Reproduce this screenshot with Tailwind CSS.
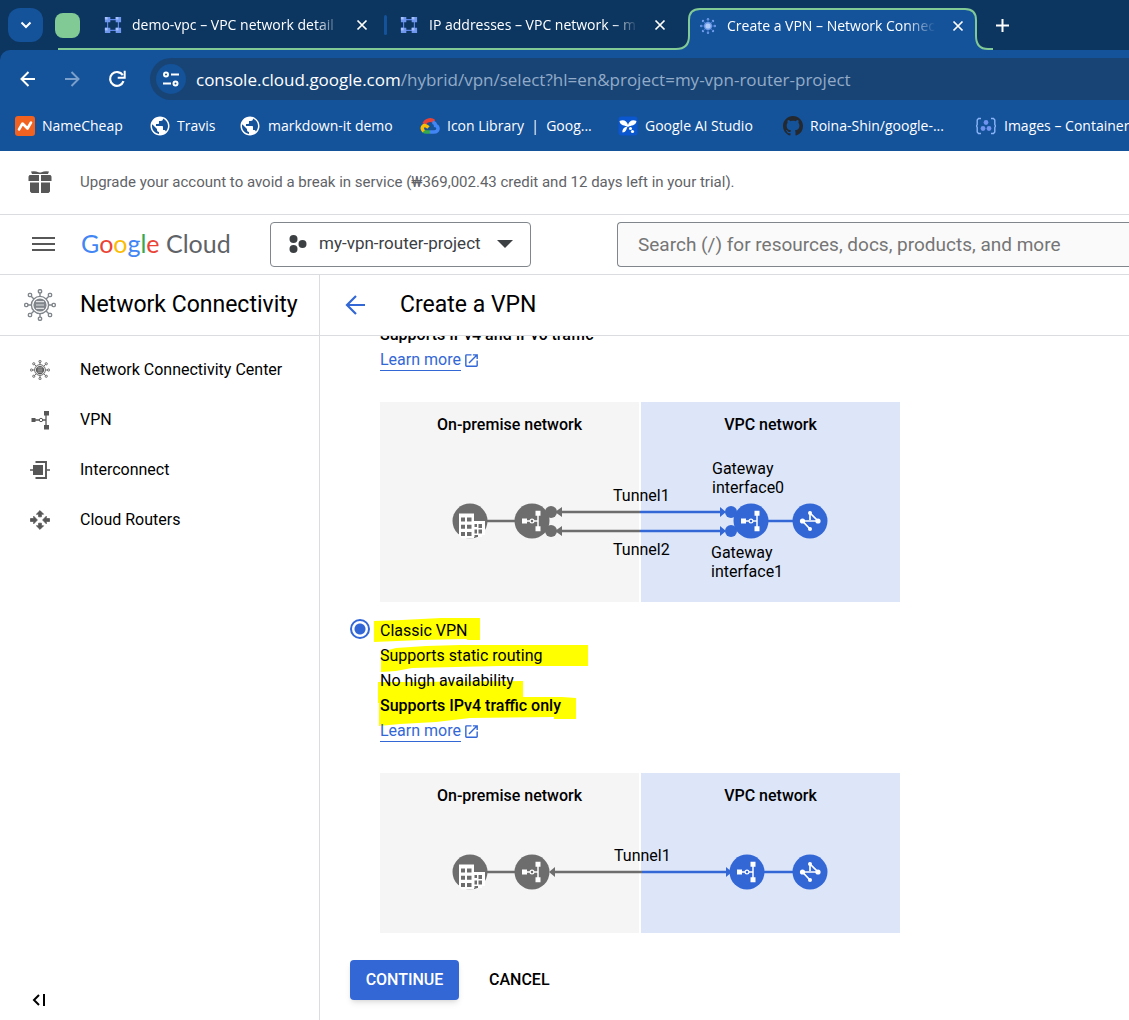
<!DOCTYPE html>
<html lang="en">
<head>
<meta charset="utf-8">
<meta name="viewport" content="width=device-width, initial-scale=1">
<title>Create a VPN – Network Connectivity</title>
<script src="https://cdn.jsdelivr.net/npm/@tailwindcss/browser@4"></script>
</head>
<body class="flex h-screen flex-col overflow-hidden bg-white font-['Roboto',sans-serif] text-base text-black">

<!-- Shared symbols -->
<svg class="hidden" aria-hidden="true">
  <symbol id="vpc" viewBox="0 0 20 20">
    <path d="M4 4h12v12H4z" fill="none" stroke="#5b86e8" stroke-width="1.3"/>
    <path d="M1 1h6v6H1zM13 1h6v6h-6zM1 13h6v6H1zM13 13h6v6h-6z" fill="#6f97ee"/>
    <path d="M1 1h3v3H1zM13 1h3v3h-3zM1 13h3v3H1zM13 13h3v3h-3z" fill="#a5c0fa"/>
  </symbol>
  <symbol id="hub" viewBox="0 0 32 32">
    <g fill="none" stroke="currentColor" stroke-width="1.4">
      <circle cx="16" cy="16" r="8.6"/>
      <path d="M16 7.4V3.6M16 24.6v3.8M7.4 16H3.6M24.6 16h3.8M9.9 9.9 7.2 7.2M22.1 9.9l2.7-2.7M9.9 22.1l-2.7 2.7M22.1 22.1l2.7 2.7"/>
      <rect x="14.4" y=".7" width="3.2" height="3.2" rx="1"/><rect x="14.4" y="28.1" width="3.2" height="3.2" rx="1"/>
      <rect x=".7" y="14.4" width="3.2" height="3.2" rx="1"/><rect x="28.1" y="14.4" width="3.2" height="3.2" rx="1"/>
      <rect x="4.4" y="4.4" width="3.2" height="3.2" rx="1"/><rect x="24.4" y="4.4" width="3.2" height="3.2" rx="1"/>
      <rect x="4.4" y="24.4" width="3.2" height="3.2" rx="1"/><rect x="24.4" y="24.4" width="3.2" height="3.2" rx="1"/>
    </g>
    <circle cx="16" cy="16" r="6.6" fill="currentColor"/>
    <path d="M12 12.6h8M12 16h8M12 19.4h8" stroke="#fff" stroke-width="1.2" opacity=".75"/>
  </symbol>
  <symbol id="hub-tab" viewBox="0 0 16 16">
    <g fill="#6f9bea"><circle cx="8" cy="1.200" r="1.200"/><circle cx="8" cy="14.800" r="1.200"/><circle cx="1.200" cy="8" r="1.200"/><circle cx="14.800" cy="8" r="1.200"/><circle cx="3" cy="3" r="1.200"/><circle cx="13" cy="3" r="1.200"/><circle cx="3" cy="13" r="1.200"/><circle cx="13" cy="13" r="1.200"/></g>
    <path d="M8 1v14M1 8h14M3 3l10 10M13 3 3 13" stroke="#4d7fdc" stroke-width=".8"/>
    <circle cx="8" cy="8" r="4" fill="#6f9bea"/><circle cx="8" cy="8" r="2.600" fill="#aecbfa"/>
  </symbol>
  <symbol id="globe" viewBox="2 2 20 20">
    <path fill="#fff" d="M12 2.500C6.750 2.500 2.500 6.750 2.500 12s4.250 9.500 9.500 9.500 9.500-4.250 9.500-9.500S17.250 2.500 12 2.500zm-1 17.430c-3.950-.49-7-3.850-7-7.930 0-.62.08-1.210.21-1.790L9 15v1c0 1.100.9 2 2 2v1.930zm6.900-2.540c-.26-.81-1-1.390-1.900-1.390h-1v-3c0-.55-.45-1-1-1H8v-2h2c.55 0 1-.45 1-1V7h2c1.100 0 2-.9 2-2v-.41c2.930 1.190 5 4.060 5 7.410 0 2.080-.8 3.970-2.100 5.390z"/>
  </symbol>
  <symbol id="close" viewBox="0 0 12 12"><path d="m1.500 1.500 9 9m0-9-9 9" stroke="#fff" stroke-width="1.700"/></symbol>
  <symbol id="external" viewBox="0 0 24 24"><path fill="currentColor" d="M19 19H5V5h7V3H5a2 2 0 0 0-2 2v14a2 2 0 0 0 2 2h14c1.100 0 2-.9 2-2v-7h-2v7zM14 3v2h3.590l-9.830 9.830 1.410 1.410L19 6.410V10h2V3h-7z"/></symbol>
  <symbol id="node-office" viewBox="-20 -20 40 40">
    <circle r="17.500" fill="#6d6d6d"/>
    <path d="M-11-7.500H4V0h11v14h-3v2H4v1.500h-12l-3-3z" fill="#fff"/>
    <path d="M-9-3.600h4v4h-4zM-3-3.600h4.500v4H-3zM-9 3.700h4v4h-4zM-3 3.700h4.500v4H-3zM-9 11h4v4h-4zM-3 11h4.500v4H-3zM4.500 3h2.500v3H4.500zM8.500 3H12v4H8.500zM4.500 8.500H7v4H4.500zM8.500 8.500H12v4H8.500zM4.500 14H8v2H4.500z" fill="#6d6d6d"/>
  </symbol>
  <symbol id="node-gateway" viewBox="-20 -20 40 40">
    <circle r="17.500" fill="currentColor"/>
    <path d="M-6 0H6M6-8V8" stroke="#fff" stroke-width="1.500" fill="none"/>
    <path d="M-10-2.500h5v5h-5zM3.500-10.300h5v5h-5zM3.500 5.300h5v5h-5z" fill="#fff"/>
    <circle r="1.900" fill="currentColor" stroke="#fff" stroke-width="1.200"/>
  </symbol>
  <symbol id="node-vpc" viewBox="-20 -20 40 40">
    <circle r="17.500" fill="#3367d6"/>
    <path d="M0 8-7.500 0H8L0-8V-1" fill="none" stroke="#fff" stroke-width="1.700"/>
    <g fill="#fff"><circle cx="-7.500" r="2.600"/><circle cx="8" r="2.600"/><circle cy="-8" r="2"/><circle cy="8" r="2"/></g>
  </symbol>
</svg>

<header class="shrink-0 bg-[#0c3560] font-['Open_Sans',sans-serif] text-white">
  <!-- Tab strip -->
  <div class="flex h-[50px] overflow-hidden">
    <button aria-label="Search tabs" class="mt-2 ml-2 grid h-[34px] w-[35px] shrink-0 place-items-center rounded-xl bg-[#14529a]">
      <svg class="size-3" viewBox="0 0 12 12"><path d="m1.500 3.500 4.500 4.500 4.500-4.500" fill="none" stroke="#fff" stroke-width="2"/></svg>
    </button>
    <div class="ml-[15px] flex w-[616px] shrink-0 items-center border-b-2 border-[#81c995] pt-0.5">
      <span class="-ml-[3px] size-[25px] shrink-0 rounded-lg bg-[#81c995]"></span>
      <a href="#" class="ml-6 flex w-[272px] items-center">
        <svg class="mr-[10px] size-[18px] shrink-0"><use href="#vpc"/></svg>
        <span class="w-[209px] overflow-hidden text-sm whitespace-nowrap [mask-image:linear-gradient(to_right,black_88%,transparent)]">demo-vpc – VPC network detail</span>
        <svg class="ml-[15px] size-3 shrink-0"><use href="#close"/></svg>
      </a>
      <span class="ml-2 h-5 w-[3px] rounded bg-[#14529a]"></span>
      <a href="#" class="ml-[13px] flex items-center">
        <svg class="mr-[11px] size-[18px] shrink-0"><use href="#vpc"/></svg>
        <span class="w-[209px] overflow-hidden text-sm whitespace-nowrap [mask-image:linear-gradient(to_right,black_88%,transparent)]">IP addresses – VPC network – m</span>
        <svg class="ml-4 size-3 shrink-0"><use href="#close"/></svg>
      </a>
    </div>
    <svg class="h-[50px] w-[26px] shrink-0" viewBox="0 0 26 50"><path d="M0 49H2Q15 49 15 36V20Q15 9 26 9V50H0z" fill="#14529a"/><path d="M0 49H2Q15 49 15 36V20Q15 9 26 9" fill="none" stroke="#81c995" stroke-width="2"/></svg>
    <a href="#" class="mt-2 flex w-[264px] shrink-0 items-center border-t-2 border-[#81c995] bg-[#14529a] pb-2">
      <svg class="mr-[11px] size-4 shrink-0"><use href="#hub-tab"/></svg>
      <span class="w-[209px] overflow-hidden text-sm whitespace-nowrap [mask-image:linear-gradient(to_right,black_85%,transparent)]">Create a VPN – Network Connec</span>
      <svg class="ml-4 size-3 shrink-0"><use href="#close"/></svg>
    </a>
    <svg class="h-[50px] w-[29px] shrink-0" viewBox="0 0 29 50"><path d="M0 9H1Q12 9 12 20V36Q12 49 24 49H29V50H0z" fill="#14529a"/><path d="M0 9H1Q12 9 12 20V36Q12 49 24 49H29" fill="none" stroke="#81c995" stroke-width="2"/></svg>
    <button aria-label="New tab" class="ml-[3px] self-center"><svg class="size-[13px]" viewBox="0 0 13 13"><path d="M6.500 0v13M0 6.500h13" stroke="#fff" stroke-width="2"/></svg></button>
  </div>

  <!-- Toolbar -->
  <div class="h-[101px] overflow-hidden rounded-tl-[10px] bg-[#14529a]">
    <div class="flex items-center pt-2">
      <button aria-label="Back" class="ml-5"><svg class="size-4" viewBox="0 0 16 16"><path d="M15 8H2m6.500-7L1.500 8l7 7" fill="none" stroke="#fff" stroke-width="2"/></svg></button>
      <button aria-label="Forward" class="ml-7"><svg class="size-4" viewBox="0 0 16 16"><path d="M1 8h13M7.500 1l7 7-7 7" fill="none" stroke="#7a9fcb" stroke-width="2"/></svg></button>
      <button aria-label="Reload" class="ml-7"><svg class="size-[18px]" viewBox="0 0 18 18"><path d="M15.500 11.200A6.900 6.900 0 1 1 14.800 5.200" fill="none" stroke="#fff" stroke-width="2.200"/><path d="M16.700.8v7h-7" fill="none" stroke="#fff" stroke-width="2"/></svg></button>
      <div class="ml-6 flex h-[42px] flex-1 items-center rounded-l-full bg-[#184475] pl-1.5">
        <button aria-label="Site information" class="grid size-[30px] shrink-0 place-items-center rounded-full bg-[#14529a]"><svg class="size-4" viewBox="0 0 16 16"><g fill="none" stroke="#fff" stroke-width="2"><circle cx="3" cy="3.500" r="2"/><path d="M8 3.500h8M0 12.500h8"/><circle cx="12.500" cy="12.500" r="2"/></g></svg></button>
        <div class="ml-[10px] pt-0.5 text-[17px] whitespace-nowrap text-[#93abc8]"><span class="text-white">console.cloud.google.com</span>/hybrid/vpn/select?hl=en&amp;project=my-vpn-router-project</div>
      </div>
    </div>
    <nav class="mt-4 flex h-5 items-center pl-[15px] text-sm whitespace-nowrap">
      <a href="#" class="flex w-[136px] shrink-0 items-center gap-[7px]"><svg class="size-5" viewBox="0 0 20 20"><rect width="20" height="20" rx="3" fill="#f1611f"/><path d="M4 13.500 7.500 7.500 12.500 12.500 16 6.500" fill="none" stroke="#fff" stroke-width="2.600" stroke-linecap="round" stroke-linejoin="round"/></svg>NameCheap</a>
      <a href="#" class="flex w-[90px] shrink-0 items-center gap-[7px]"><svg class="-ml-px size-5"><use href="#globe"/></svg>Travis</a>
      <a href="#" class="flex w-[179px] shrink-0 items-center gap-2"><svg class="-ml-px size-5"><use href="#globe"/></svg>markdown-it demo</a>
      <a href="#" class="flex w-[198px] shrink-0 items-center gap-[7px] whitespace-pre"><svg class="size-5" viewBox="0 0 20 20" fill="none" stroke-width="4"><path d="M4.300 8A6 5.500 0 0 1 14 5.500" stroke="#ea4335"/><path d="M12.500 6.300Q15.500 7 15.600 9.600 18.200 10.200 18 13 17.500 16 14 16H10" stroke="#4285f4" stroke-width="3.500"/><path d="M10 16H6.500Q4.500 16 3.500 15" stroke="#34a853" stroke-width="3.500"/><path d="M3.700 15.300Q1.200 12.500 3 10.300 5 8.200 8.500 11.500" stroke="#fbbc04" stroke-width="3.500"/></svg>Icon Library  |  Goog...</a>
      <a href="#" class="flex w-[165px] shrink-0 items-center gap-[7px]"><svg class="size-5" viewBox="0 0 20 20"><rect x=".5" y=".5" width="19" height="19" rx="3" fill="#0b57d0"/><path d="M10 11C7 9 2 10 1.500 5 5 3 9 4.500 10 9 11 4.500 15 3 18.500 5 18 10 13 9 10 11zM9.500 10.500C8.500 13 8 16.500 4.500 16.500 4 13.500 6 11 9.500 10.500z" fill="#fff"/><circle cx="12.500" cy="12.500" r="1.500" fill="#fff"/><circle cx="14.500" cy="15.500" r="1.600" fill="#fff"/></svg>Google AI Studio</a>
      <a href="#" class="flex w-[193px] shrink-0 items-center gap-[7px]"><svg class="size-5" viewBox="0 0 16 16"><path fill="#24292f" d="M8 0C3.580 0 0 3.580 0 8c0 3.540 2.290 6.530 5.470 7.590.4.070.55-.17.55-.38 0-.19-.01-.82-.01-1.490-2.010.37-2.530-.49-2.690-.94-.09-.23-.48-.94-.82-1.130-.28-.15-.68-.52-.01-.53.63-.01 1.080.58 1.230.82.72 1.210 1.870.87 2.330.66.07-.52.28-.87.51-1.070-1.780-.2-3.640-.89-3.640-3.950 0-.87.31-1.590.82-2.150-.08-.2-.36-1.020.08-2.120 0 0 .67-.21 2.200.82.64-.18 1.320-.27 2-.27s1.360.09 2 .27c1.530-1.040 2.200-.82 2.200-.82.44 1.100.16 1.920.08 2.120.51.56.82 1.270.82 2.150 0 3.070-1.870 3.750-3.650 3.950.29.25.54.73.54 1.480 0 1.070-.01 1.930-.01 2.200 0 .21.15.46.55.38A8 8 0 0 0 16 8c0-4.420-3.580-8-8-8z"/></svg>Roina-Shin/google-...</a>
      <a href="#" class="flex shrink-0 items-center gap-2"><svg class="size-5" viewBox="0 0 20 20"><path d="M5 2.500H2.500L1.200 4v4.500L.5 10l.7 1.500V16l1.300 1.500H5M15 2.500h2.500L18.800 4v4.500l.7 1.500-.7 1.500V16l-1.300 1.500H15" fill="none" stroke="#8ab4f8" stroke-width="1.400"/><g fill="#6f93ee"><circle cx="10" cy="6.500" r="2.400"/><circle cx="7" cy="12.500" r="2.400"/><circle cx="13" cy="12.500" r="2.400"/></g></svg>Images – Container</a>
    </nav>
  </div>
</header>

<!-- Trial banner -->
<div class="flex h-16 shrink-0 items-center border-b border-[#dadce0] pl-7 text-[15px] text-[#5f6368]">
  <svg class="mr-7 size-6" viewBox="0 1 24 24" fill="#575757"><path d="M1.500 5H11v6H.5V6.500zM13 5h9.500l1 1.500V11H13zM2 12.500h9V23H3.500L2 21.500zM13 12.500h9v9L20.500 23H13z"/><path d="M3 1.500Q7 .5 10.500 2.200q1.500.8 3 0Q17 .5 21 1.500L20 4H4z"/></svg>
  <p>Upgrade your account to avoid a break in service (₩369,002.43 credit and 12 days left in your trial).</p>
</div>

<!-- Console bar -->
<div class="flex h-[60px] shrink-0 items-center border-b border-[#dadce0]">
  <button aria-label="Navigation menu" class="ml-8"><svg class="h-[15px] w-[23px]" viewBox="0 0 23 15"><path d="M0 1h23M0 7h23M0 13h23" stroke="#575757" stroke-width="2"/></svg></button>
  <a href="#" class="ml-[26px] w-[189px] shrink-0 pb-0.5 font-['Lato',sans-serif] text-[25px] text-[#5f6368]"><span class="text-[#4285f4]">G</span><span class="text-[#ea4335]">o</span><span class="text-[#fbbc04]">o</span><span class="text-[#4285f4]">g</span><span class="text-[#34a853]">l</span><span class="text-[#ea4335]">e</span> Cloud</a>
  <button class="flex h-[45px] w-[261px] shrink-0 items-center rounded border border-[#80868b] pr-[17px] pb-0.5 pl-[18px] text-[17px] text-[#3c4043]">
    <svg class="mr-3 h-[18px] w-[18px]" viewBox="0 0 18 18" fill="#3c4043"><circle cx="4.500" cy="4" r="4"/><circle cx="4.500" cy="14" r="4"/><circle cx="13.500" cy="9" r="4"/></svg>
    my-vpn-router-project
    <svg class="ml-auto h-2 w-4" viewBox="0 0 16 8"><path d="M0 0h16L8 8z" fill="#3c4043"/></svg>
  </button>
  <input type="search" aria-label="Search" placeholder="Search (/) for resources, docs, products, and more" class="ml-[86px] h-[45px] min-w-0 flex-1 rounded-l border border-r-0 border-[#80868b] bg-[#fafafa] pl-5 text-[19px] placeholder:text-[#757575]">
</div>

<div class="flex min-h-0 flex-1">
  <!-- Product sidebar -->
  <aside class="flex w-80 shrink-0 flex-col border-r border-[#dadce0]">
    <div class="flex h-[61px] shrink-0 items-center border-b border-[#dadce0] pl-6">
      <svg class="mr-6 size-8 text-[#80868b]"><use href="#hub"/></svg>
      <h2 class="text-[23px]">Network Connectivity</h2>
    </div>
    <nav class="pt-[9px]">
      <a href="#" class="flex h-[50px] items-center gap-[30px] pl-[30px]"><svg class="size-5 text-[#575757]"><use href="#hub"/></svg>Network Connectivity Center</a>
      <a href="#" class="flex h-[50px] items-center gap-[30px] pl-[30px]"><svg class="size-5" viewBox="0 0 20 20"><path d="M4 10h12M16 3v14" stroke="#575757" stroke-width="1.300"/><path d="M1.500 8h4v4h-4zM14 1h5v4.500h-5zM14 15h5v4.500h-5z" fill="#575757"/><circle cx="11" cy="10" r="1.700" fill="#fff" stroke="#575757"/></svg>VPN</a>
      <a href="#" class="flex h-[50px] items-center gap-[30px] pl-[30px]"><svg class="size-5" viewBox="0 0 20 20"><path d="M3 5h10v10H3zM0 9.200h3v1.600H0zM17 9.200h3v1.600h-3z" fill="#575757"/><path d="M5.500 2H16v16H5.500" fill="none" stroke="#575757" stroke-width="1.900"/></svg>Interconnect</a>
      <a href="#" class="flex h-[50px] items-center gap-[30px] pl-[30px]"><svg class="size-5" viewBox="0 0 20 20" fill="#575757" stroke="#575757" stroke-width=".8"><path d="m10 .6 3.600 3.600h-2.200v2.600H8.600V4.200H6.400zM10 19.400l-3.600-3.600h2.200v-2.600h2.800v2.600h2.200zM7.400 10l-3.700 3.800v-2.400H.4V8.600h3.300V6.200zM12.600 10l3.700-3.800v2.400h3.300v2.800h-3.300v2.400z"/></svg>Cloud Routers</a>
    </nav>
    <button aria-label="Collapse menu" class="mt-auto mb-3.5 ml-8 self-start"><svg class="h-3 w-3.5" viewBox="0 0 14 12"><path d="M7 1 2 6l5 5M12 0v12" fill="none" stroke="#000" stroke-width="2"/></svg></button>
  </aside>

  <main class="flex min-w-0 flex-1 flex-col">
    <div class="flex h-[61px] shrink-0 items-center border-b border-[#dadce0] pl-[25px]">
      <button aria-label="Go back" class="mr-[35px]"><svg class="size-5" viewBox="0 0 20 20"><path d="M20 10H2m9-9-9 9 9 9" fill="none" stroke="#3367d6" stroke-width="2.200"/></svg></button>
      <h1 class="text-[23px]">Create a VPN</h1>
    </div>

    <form class="min-h-0 flex-1 overflow-hidden pl-[30px]">
      <!-- High-availability option, scrolled partly out of view -->
      <section class="-mt-3.5 pl-[30px] leading-[25px]">
        <p class="font-medium">Supports IPv4 and IPv6 traffic</p>
        <a href="#" class="inline-flex items-center gap-0.5 text-[#3367d6]"><span class="border-b border-[#3367d6] leading-5">Learn more</span><svg class="size-[17px]"><use href="#external"/></svg></a>
      </section>
      <figure class="relative mt-[30px] ml-[30px] grid h-[200px] w-[520px] grid-cols-2 gap-0.5 text-center font-medium">
        <div class="bg-[#f5f5f5] pt-[11px]">On-premise network</div>
        <div class="bg-[#dde6f8] pt-[11px]">VPC network</div>
        <svg class="absolute inset-0 size-full" viewBox="0 0 520 200">
          <g stroke-width="2.500" fill="none"><path d="M106 119h30M182 110h78M182 129h78" stroke="#6d6d6d"/><path d="M260 110h81M260 129h81M387 119h27" stroke="#3367d6"/></g>
          <path d="M175 110l7-5v10zM175 129l7-5v10z" fill="#6d6d6d"/><path d="M346 110l-6-5v10zM346 129l-6-5v10z" fill="#3367d6"/>
          <g fill="#6d6d6d"><circle cx="171" cy="110" r="6"/><circle cx="171" cy="129" r="6"/></g>
          <g fill="#3367d6"><circle cx="351" cy="110" r="6"/><circle cx="351" cy="129" r="6"/></g>
          <use href="#node-office" x="70" y="99" width="40" height="40"/>
          <use href="#node-gateway" x="132" y="99" width="40" height="40" class="text-[#6d6d6d]"/>
          <use href="#node-gateway" x="351" y="99" width="40" height="40" class="text-[#3367d6]"/>
          <use href="#node-vpc" x="410" y="99" width="40" height="40"/>
          <g class="font-normal"><text x="233" y="99">Tunnel1</text><text x="233" y="153">Tunnel2</text><text x="332" y="72">Gateway</text><text x="332" y="91">interface0</text><text x="331" y="156">Gateway</text><text x="331" y="175">interface1</text></g>
        </svg>
      </figure>

      <section class="relative mt-4 flex leading-[25px]">
        <!-- Highlighter strokes behind the option text -->
        <svg class="absolute top-0 left-6 h-[110px] w-[216px]" viewBox="374 618 216 110" fill="#ffff00"><path d="M374 621l28-1 39-2h39v22h-13v-1l-46 1-47 2zM381 652l15-4 30-2 34-1h128v21h-89l-87 2-16 3-15 1zM378 682h37l108-1v16h39l14 1v21h-22v-2l-84 1-34 4-36 2-21 2v-23h-1z"/></svg>
        <input type="radio" id="classic" name="vpn" checked class="relative mt-px mr-2.5 size-5 shrink-0 appearance-none rounded-full border-2 border-[#3367d6] bg-[radial-gradient(circle,#3367d6_5px,white_6px)]">
        <div class="relative">
          <label for="classic" class="block">Classic VPN<br>Supports static routing<br>No high availability<br><span class="font-medium">Supports IPv4 traffic only</span></label>
          <a href="#" class="inline-flex items-center gap-0.5 text-[#3367d6]"><span class="border-b border-[#3367d6] leading-5">Learn more</span><svg class="size-[17px]"><use href="#external"/></svg></a>
        </div>
      </section>
      <figure class="relative mt-[30px] ml-[30px] grid h-40 w-[520px] grid-cols-2 gap-0.5 text-center font-medium">
        <div class="bg-[#f5f5f5] pt-[11px]">On-premise network</div>
        <div class="bg-[#dde6f8] pt-[11px]">VPC network</div>
        <svg class="absolute inset-0 size-full" viewBox="0 0 520 160">
          <g stroke-width="2.500" fill="none"><path d="M106 99h30M174 99h88" stroke="#6d6d6d"/><path d="M262 99h86M384 99h30" stroke="#3367d6"/></g>
          <path d="M169 99l6-5v10z" fill="#6d6d6d"/><path d="M352 99l-6-5v10z" fill="#3367d6"/>
          <use href="#node-office" x="70" y="79" width="40" height="40"/>
          <use href="#node-gateway" x="132" y="79" width="40" height="40" class="text-[#6d6d6d]"/>
          <use href="#node-gateway" x="347" y="79" width="40" height="40" class="text-[#3367d6]"/>
          <use href="#node-vpc" x="410" y="79" width="40" height="40"/>
          <text x="234" y="88" class="font-normal">Tunnel1</text>
        </svg>
      </figure>
      <div class="mt-[27px] flex items-center gap-[30px] font-medium">
        <button type="button" class="h-10 w-[109px] rounded bg-[#3367d6] text-white shadow-md">CONTINUE</button>
        <button type="button">CANCEL</button>
      </div>
    </form>
  </main>
</div>
</body>
</html>
